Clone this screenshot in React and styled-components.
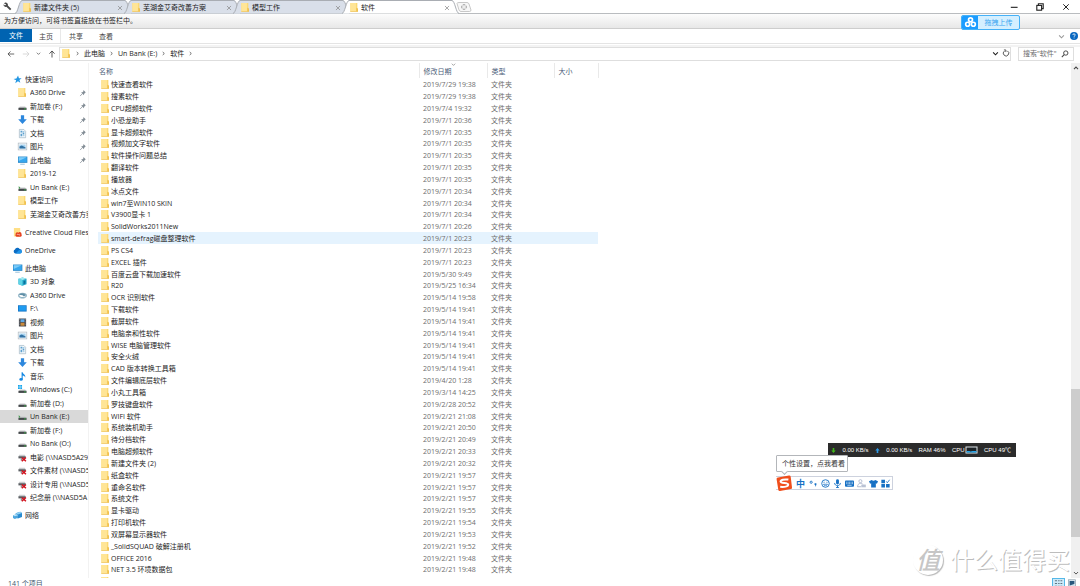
import React from "react";
import styled, { createGlobalStyle, css } from "styled-components";

const GlobalStyle = createGlobalStyle`
  * { box-sizing: border-box; }
  html, body { margin: 0; height: 100%; background: #fff; overflow: hidden; }
  #root { height: 100%; }
  body, button, input {
    font-family: "Open Sans", "Noto Sans CJK SC", sans-serif;
    font-size: 7px;
    line-height: 11px;
    color: #1c1c1c;
  }
  button { border: 0; padding: 0; background: none; }
  a { color: inherit; text-decoration: none; }
`;

/* ---------- icons ---------- */

const Svg = styled.svg`
  display: block;
  flex: none;
  overflow: visible;
`;

const drive = (
  <>
    <path d="M2 5h6l1 2H1z" fill="#c9ccce" />
    <rect x="0.5" y="6.4" width="9" height="2.4" fill="#45494c" />
    <rect x="7" y="7.2" width="1.6" height="1" fill="#3fd04e" />
  </>
);
const monitor = (
  <>
    <rect x="0" y="0.6" width="10.4" height="7" fill="#2b87c8" />
    <rect x="0.8" y="1.4" width="8.8" height="5.4" fill="#35a6ee" />
    <path d="M0.8 1.4h8.8L0.8 5.6z" fill="#7ccbf8" />
    <path d="M2.5 8.6h5v1h-5z" fill="#8fb9d6" />
  </>
);
const netDrive = (
  <>
    <path d="M1.5 2h6l1.2 2H0.5z" fill="#c9ccce" />
    <rect x="0.5" y="3.6" width="8" height="2.4" fill="#5a5e62" />
    <rect x="3" y="6" width="2" height="2.4" fill="#8d9194" />
    <path d="M4.2 5l4.6 4.2M8.8 5L4.2 9.2" stroke="#d3131f" strokeWidth="1.7" />
  </>
);

const glyphs = {
  folder: (
    <>
      <path d="M0.4 0h7.8v9.6H0.4z" fill="#fbd975" />
      <path d="M0.4 0h6.2v9.6H0.4z" fill="#ffe596" />
      <path d="M7 5.2l1.9 1v3.4H7z" fill="#f1c14e" />
      <path d="M0.4 9.2h8.2v.8H0.4z" fill="#eec667" />
    </>
  ),
  star: (
    <path d="M5.6 0.6l1 2.9 3 .2-2.4 1.9.9 3-2.6-1.6-3 2.2 1-3.3L.6 4.4l3.2-.4z" fill="#2497e3" />
  ),
  drive,
  driveGreen: (
    <>
      {drive}
      <path d="M0.6 3.6l2 1-1.4 2.6z" fill="#4f9d5a" />
    </>
  ),
  driveWin: (
    <>
      {drive}
      <path d="M0 0h2v2H0zM2.5 0h2v2h-2zM0 2.5h2v2H0zM2.5 2.5h2v2h-2z" fill="#15a5ec" />
    </>
  ),
  down: <path d="M3.2 0.4h3.6v4.4h3L5 10 .2 4.800h3z" fill="#2c87dd" />,
  doc: (
    <>
      <path d="M1.5.5h5l2 2v7.2h-7z" fill="#f4f9fc" stroke="#8aa4b5" strokeWidth=".6" />
      <path d="M2.8 2h2v2h-2zM5.2 4h1.8v2H5.2zM2.8 5.4h1.8v2.6H2.8z" fill="#5b9fce" />
      <path d="M5.2 7.4h2M5.2 2.8h2" stroke="#5b9fce" strokeWidth=".6" />
    </>
  ),
  picture: (
    <>
      <rect x="0.2" y="1.2" width="9.6" height="7.6" fill="#f6f8fa" stroke="#a9b4bd" strokeWidth=".7" />
      <rect x="1.6" y="2.8" width="6.8" height="4.4" fill="#a9d4f1" />
      <path d="M1.6 5l2.600-1.200 4.200 2.200v1.200H1.6z" fill="#3373a5" />
    </>
  ),
  monitor,
  creative: (
    <>
      <path d="M1 0h7v9.4H1z" fill="#ffdf86" />
      <path d="M3 7a1.8 1.8 0 013-1.8A2 2 0 019.4 7 1.6 1.6 0 018 9.6H4.6A1.6 1.6 0 013 7z" fill="#e5401f" />
      <path d="M4.4 7.8a1 1 0 011.6-.6l1 .9a.8.8 0 000-1.4" fill="none" stroke="#fff" strokeWidth=".6" />
    </>
  ),
  cloud: (
    <>
      <path d="M2.4 8.2a2.2 2.2 0 01-.2-4.2A3 3 0 017.4 3.2a2.5 2.5 0 010 5z" fill="#0a6cc4" />
      <path d="M3 8.2l3.4-3.4A2.4 2.4 0 019.8 6a2 2 0 01-1.4 2.2z" fill="#2196ea" />
    </>
  ),
  cube: (
    <>
      <path d="M0.5 2L5 .5 9.5 2v6L5 9.6.5 8z" fill="#25a7c9" />
      <path d="M0.5 2L5 3.4v6.2L.5 8z" fill="#5fd4e6" />
      <path d="M0.5 2L5 .5 9.5 2 5 3.4z" fill="#a4ebf2" />
      <path d="M6.2 4.4l2-.6v3.4l-2 .8z" fill="#0b6f99" />
    </>
  ),
  a360: (
    <>
      <ellipse cx="5" cy="5" rx="4.2" ry="2.4" fill="none" stroke="#8fb3c5" strokeWidth="1.4" />
      <path d="M1 4.2C3 2 7 2.2 9 4.4L6.6 6 5 4.6z" fill="#5f8ea6" />
      <path d="M2 7.4c2 1.4 4.4 1 5.6.2" stroke="#b6ccd6" strokeWidth=".9" fill="none" />
    </>
  ),
  screen: (
    <>
      <rect x="0" y="1.4" width="9.6" height="7" fill="#1273c4" />
      <rect x="0.8" y="2.2" width="8" height="5.2" fill="#1f9bf0" />
    </>
  ),
  video: (
    <>
      <rect x="1" y="0.6" width="8" height="8.8" fill="#3b3e45" />
      <path d="M2.8 1.4h4.4v3.2H2.8z" fill="#5fa9e6" />
      <path d="M2.8 5.2h4.4v3.4H2.8z" fill="#c98a3c" />
      <path d="M1.9 1v8M8.1 1v8" stroke="#cfd2d6" strokeWidth=".6" strokeDasharray="1 1" />
    </>
  ),
  music: (
    <>
      <path d="M4 .2h1.200c.2 2.200 3.600 2.600 2.800 6-.4-1.600-1.600-2.200-2.800-2.400V8H4z" fill="#1388e3" />
      <ellipse cx="3.400" cy="8.200" rx="1.900" ry="1.500" fill="#1388e3" />
    </>
  ),
  netDrive,
  network: (
    <>
      <path d="M3 2.4L8 .8l2 1.4v4.4L5.4 8.4 3 7z" fill="#2a8bd0" />
      <path d="M3 2.4L8 .8l2 1.4-4.6 1.6z" fill="#8fd0f3" />
      <path d="M0 4.6l4-1 1.6 1v3L2 9 0 7.8z" fill="#4ca5dd" />
      <path d="M0 4.6l4-1 1.6 1L2 5.8z" fill="#b8e3f8" />
    </>
  ),
  pin: (
    <>
      <path d="M5.6 1.4l3 3-1 .4-1.2 1.4-.2 1.6L2.6 4.4l1.6-.2L5.4 3z" fill="#828c95" />
      <path d="M4 6L1.4 8.8" stroke="#828c95" strokeWidth=".9" />
    </>
  ),
  wrench: (
    <path
      d="M1 1.8L2.4.6a2.6 2.6 0 013 3.2l3.9 4-1.5 1.5-4-3.9A2.6 2.6 0 01.6 2.4L2.2 4 3.6 2.6z"
      fill="#484848"
    />
  ),
  back: <path d="M9 5H1.4M4.4 1.8L1.2 5l3.2 3.2" fill="none" stroke="#444" strokeWidth="1" />,
  forward: <path d="M1 5h7.6M5.6 1.8L8.8 5 5.6 8.2" fill="none" stroke="#cfcfcf" strokeWidth="1" />,
  up: <path d="M5 9.4V1.4M1.8 4.6L5 1.2l3.2 3.4" fill="none" stroke="#444" strokeWidth="1.1" />,
  chevDown: <path d="M1.6 3.4L5 6.8l3.4-3.4" fill="none" stroke="currentColor" strokeWidth="1.5" />,
  chevUp: <path d="M1.6 6.8L5 3.4l3.4 3.4" fill="none" stroke="currentColor" strokeWidth="1.7" />,
  chevRight: <path d="M3.4 2L6.6 5 3.4 8" fill="none" stroke="#444" strokeWidth="1.5" />,
  close: <path d="M1.6 1.6l6.8 6.8M8.4 1.6L1.6 8.4" fill="none" stroke="currentColor" strokeWidth="1.2" />,
  minimize: <path d="M1 5.4h8.4" stroke="#222" strokeWidth="1.4" />,
  restore: (
    <>
      <rect x="1" y="3" width="6" height="6" fill="none" stroke="#222" strokeWidth="1.4" />
      <path d="M3 3V1h6v6H7" fill="none" stroke="#222" strokeWidth="1.4" />
    </>
  ),
  refresh: <path d="M3 2.6A3.4 3.4 0 106.8 2.4M2.4 1.2h2.4v2.6" fill="none" stroke="#555" strokeWidth="1.2" />,
  search: (
    <>
      <circle cx="6" cy="3.8" r="2.7" fill="none" stroke="#444" strokeWidth="1.2" />
      <path d="M4 5.8L1 9" stroke="#444" strokeWidth="1.3" />
    </>
  ),
  help: (
    <>
      <circle cx="5" cy="5" r="5" fill="#0a68c0" />
      <path d="M3.5 3.8a1.5 1.5 0 113 0c0 1-1.4 1-1.4 2.2M5.1 7v1" fill="none" stroke="#fff" strokeWidth="1" />
    </>
  ),
  disk: (
    <g fill="none" stroke="#fff" strokeWidth="1.5">
      <circle cx="5" cy="2.6" r="1.8" />
      <circle cx="2.4" cy="6.6" r="1.8" />
      <circle cx="7.6" cy="6.6" r="1.8" />
    </g>
  ),
  punct: (
    <>
      <circle cx="2.4" cy="3.6" r="1.2" fill="none" stroke="#1670c4" strokeWidth="1" />
      <path d="M6.2 4.8h2v2L6.6 8.8l.4-2h-.8z" fill="#1670c4" />
    </>
  ),
  smile: (
    <>
      <circle cx="5" cy="5" r="4.2" fill="none" stroke="#1670c4" strokeWidth="1" />
      <path d="M3.4 3v1.4M6.6 3v1.4M2.8 5.8a2.3 2.3 0 004.4 0z" fill="none" stroke="#1670c4" strokeWidth=".8" />
    </>
  ),
  mic: (
    <>
      <rect x="3.4" y="0.4" width="3.2" height="5.6" rx="1.6" fill="#1670c4" />
      <path d="M1.8 4.4c0 4 6.4 4 6.4 0M5 7.4v2.2M3.4 9.4h3.2" fill="none" stroke="#1670c4" strokeWidth="1" />
    </>
  ),
  keyboard: (
    <>
      <rect x="0" y="1.6" width="10" height="7" rx="1" fill="#1670c4" />
      <path d="M1.4 3.6h7.400M1.4 5.2h7.400" stroke="#fff" strokeWidth=".8" strokeDasharray="1 .6" />
      <path d="M2.6 7h4.8" stroke="#fff" strokeWidth=".7" />
    </>
  ),
  person: (
    <>
      <circle cx="3.8" cy="2.4" r="1.7" fill="none" stroke="#a9b4cb" strokeWidth=".9" />
      <path d="M.6 8.6C.6 4 6 4 6.4 6M.6 8.6h4" fill="none" stroke="#a9b4cb" strokeWidth="1" />
      <rect x="4.8" y="6.2" width="5" height="3" fill="#b9c2d4" />
    </>
  ),
  shirt: <path d="M3 1c1 1.2 3 1.2 4 0l3 1.6-1.2 2.6-1.2-.6V9.4H2.4V4.6l-1.2.6L0 2.6z" fill="#1670c4" />,
  grid: (
    <>
      <path d="M.4.8h4v3.8h-4zM.4 5.6h4v3.8h-4zM5.6 5.6h4v3.8h-4z" fill="#1670c4" />
      <path d="M5.8 2.6l1.2 1.6L9.6.8" fill="none" stroke="#1670c4" strokeWidth=".9" />
    </>
  ),
  arrowDown: <path d="M3.4 0h3.200v5H9.400L5 10 .6 5h2.800z" fill="#3fb618" />,
  arrowUp: <path d="M3.4 10h3.200V5H9.400L5 0 .6 5h2.800z" fill="#2f9be8" />,
  details: (
    <path d="M1 2h2.4M1 5h2.4M1 8h2.4M4.6 2h1.6M4.6 5h1.6M4.6 8h1.6M7.2 2h2M7.2 5h2M7.2 8h2" stroke="#5f7483" strokeWidth="1.2" />
  ),
  thumbs: (
    <>
      <rect x="0.5" y="1" width="9" height="8" fill="#dbe9f3" stroke="#8296a3" strokeWidth=".8" />
      <path d="M2 2.4h6v4L2 8z" fill="#27567c" />
    </>
  ),
};

const Icon = ({ name, size = 9 }) => (
  <Svg width={size} height={size} viewBox="0 0 10 10" aria-hidden="true">
    {glyphs[name]}
  </Svg>
);

/* ---------- window frame ---------- */

const Window = styled.div`
  position: relative;
  display: flex;
  flex-direction: column;
  height: 100%;
  overflow: hidden;
  background: #fff;
`;

const TabStrip = styled.header`
  display: flex;
  height: 14px;
  flex: none;
  border-bottom: 1px solid #b9bcbf;
`;

const WrenchButton = styled.button`
  width: 15px;
  padding: 2px 0 0 3px;
  display: flex;
`;

const TabItem = styled.div`
  position: relative;
  display: flex;
  align-items: center;
  gap: 2px;
  width: 109px;
  height: 14px;
  padding: 1px 0 0 8px;
  z-index: ${(p) => (p.$active ? 2 : 0)};
`;

const TabShape = styled.svg`
  position: absolute;
  left: 0;
  top: 0;
  width: 120px;
  height: 14px;
  z-index: -1;
`;

const TabLabel = styled.button`
  flex: 1;
  text-align: left;
  white-space: nowrap;
`;

const TabClose = styled.button`
  color: #888;
  padding-right: 1px;
`;

const NewTab = styled.button`
  margin-left: 5px;
`;

const WindowButtons = styled.div`
  display: flex;
  align-items: center;
  gap: 18px;
  margin-left: auto;
  padding-right: 10px;
  color: #222;
`;

const BookmarkBar = styled.div`
  flex: none;
  height: 15px;
  padding: 1px 4px;
  background: linear-gradient(#fcfcfc, #e7e7e7);
  border-bottom: 1px solid #cdcdcd;
`;

const Ribbon = styled.nav`
  display: flex;
  align-items: stretch;
  flex: none;
  height: 15px;
  border-bottom: 1px solid #e4e4e4;
`;

const RibbonTab = styled.button`
  width: 30px;
  color: #444;
  ${(p) =>
    p.$file &&
    css`
      width: 32px;
      margin-bottom: 1px;
      background: #0063b1;
      color: #fff;
    `}
  ${(p) =>
    p.$current &&
    css`
      width: 29px;
      border-right: 1px solid #e8e8e8;
    `}
`;

const RibbonTools = styled.div`
  display: flex;
  align-items: center;
  gap: 5px;
  margin-left: auto;
  padding-right: 2px;
  color: #999;
`;

const AddressRow = styled.div`
  display: flex;
  flex: none;
  height: 18px;
  padding-right: 6px;
  border-top: 2px solid #f3f3f3;
  margin-top: 1px;
`;

const NavButtons = styled.div`
  display: flex;
  align-items: center;
  justify-content: space-between;
  width: 59px;
  padding: 0 3px 3px 7px;
  color: #555;
`;

const fieldBox = css`
  display: flex;
  align-items: center;
  height: 14px;
  border: 1px solid #dedede;
`;

const AddressBox = styled.div`
  ${fieldBox}
  flex: 1;
  gap: 4px;
  padding: 0 0 2px 2px;
`;

const AddressTools = styled.div`
  display: flex;
  align-items: center;
  gap: 3px;
  margin-left: auto;
`;

const SearchBox = styled.label`
  ${fieldBox}
  width: 56px;
  margin-left: 7px;
  padding: 0 4px 1px 4px;
`;

const SearchInput = styled.input`
  flex: 1;
  min-width: 0;
  padding: 0;
  border: 0;
  outline: 0;
  background: none;
  &::placeholder { color: #6d6d6d; opacity: 1; }
`;

/* ---------- body ---------- */

const Body = styled.div`
  display: flex;
  flex: 1;
  min-height: 0;
`;

const Sidebar = styled.nav`
  flex: none;
  width: 89px;
  padding-top: 9px;
  border-right: 1px solid #f2f2f2;
  overflow: hidden;
`;

const TreeGroup = styled.ul`
  list-style: none;
  margin: 0 0 4px;
  padding: 0;
`;

const TreeItem = styled.li`
  height: 14px;
  &:nth-child(even) { height: 13px; }
`;

const TreeLink = styled.a`
  display: flex;
  align-items: center;
  gap: 3px;
  width: 88px;
  height: 100%;
  padding-left: ${(p) => (p.$root ? 13 : 18)}px;
  background: ${(p) => (p.$selected ? "#d9d9d9" : "transparent")};
  white-space: nowrap;
  overflow: hidden;
`;

const TreeText = styled.span`
  flex: 1;
  min-width: 0;
  overflow: hidden;
`;

const PinSlot = styled.span`
  padding-right: 1px;
`;

const Listing = styled.main`
  flex: 1;
  min-width: 0;
  padding-left: 9px;
  overflow: hidden;
`;

const FileTable = styled.table`
  width: 500px;
  table-layout: fixed;
  border-collapse: collapse;
`;

const HeadCell = styled.th`
  position: relative;
  width: ${(p) => p.$width}px;
  height: 15px;
  padding: 1px 0 0 ${(p) => (p.$first ? 1 : 4)}px;
  border-right: 1px solid #e9e9e9;
  text-align: left;
  font-weight: 400;
  color: #4c607a;
`;

const SortMark = styled.span`
  position: absolute;
  left: 31px;
  top: -1px;
  color: #888;
`;

const Row = styled.tr`
  height: 12px;
  background: ${(p) => (p.$hover ? "#e5f3fe" : "transparent")};
  &:nth-child(6n) { height: 11px; }
`;

const Cell = styled.td`
  padding: 0 0 0 4px;
  color: #6d6d6d;
  white-space: nowrap;
`;

const NameCell = styled(Cell)`
  padding-left: 3px;
  color: #1c1c1c;
`;

const NameWrap = styled.span`
  display: flex;
  align-items: center;
  gap: 1px;
`;

const ScrollTrack = styled.div`
  display: flex;
  flex-direction: column;
  align-items: center;
  flex: none;
  width: 9px;
  padding: 2px 0;
  background: #f0f0f0;
  color: #444;
`;

const ScrollThumb = styled.div`
  width: 100%;
  height: 148px;
  margin: auto 0 33px;
  background: #cdcdcd;
`;

const StatusBar = styled.footer`
  display: flex;
  justify-content: space-between;
  flex: none;
  height: 8px;
  padding: 0 2px 0 8px;
  color: #40566e;
`;

const StatusText = styled.span`
  height: 11px;
`;

const ViewButtons = styled.div`
  display: flex;
`;

const ViewButton = styled.button`
  display: flex;
  justify-content: center;
  width: 13px;
  height: 12px;
  border: 1px solid ${(p) => (p.$on ? "#55b8e8" : "transparent")};
  background: ${(p) => (p.$on ? "#cdeaf9" : "transparent")};
`;

/* ---------- floating widgets ---------- */

const UploadButton = styled.button`
  position: absolute;
  top: 15px;
  right: 60px;
  display: flex;
  width: 59px;
  height: 15px;
  border: 1px solid #45b1f7;
  border-radius: 2px;
  background: #d4efff;
  overflow: hidden;
  color: #3aa4f0;
`;

const UploadIcon = styled.span`
  display: flex;
  align-items: center;
  justify-content: center;
  width: 16px;
  height: 13px;
  background: #1c9cff;
`;

const UploadText = styled.span`
  flex: 1;
  line-height: 13px;
`;

const Monitor = styled.aside`
  position: absolute;
  right: 64px;
  bottom: 129px;
  display: flex;
  align-items: center;
  justify-content: space-between;
  width: 188px;
  height: 14px;
  padding: 0 5px 0 3px;
  background: #2b2b2b;
  color: #fff;
  font-family: "Liberation Sans", "Noto Sans CJK SC", sans-serif;
  font-size: 6px;
  white-space: nowrap;
`;

const CpuGauge = styled.span`
  display: flex;
  align-items: center;
`;

const Tooltip = styled.div`
  position: absolute;
  right: 232px;
  bottom: 114px;
  width: 72px;
  height: 17px;
  padding-left: 5px;
  border: 1px solid #b3b6ba;
  border-radius: 1px;
  background: #fff;
  line-height: 15px;
  color: #333;
  white-space: nowrap;
  &::after {
    content: "";
    position: absolute;
    left: 5px;
    bottom: -3px;
    width: 4px;
    height: 4px;
    border: solid #b3b6ba;
    border-width: 0 1px 1px 0;
    background: #fff;
    transform: rotate(45deg);
  }
`;

const InputBar = styled.div`
  position: absolute;
  right: 187px;
  bottom: 96px;
  display: flex;
  align-items: center;
  gap: 3px;
  height: 14px;
  padding-right: 2px;
  border: 1px solid #cdd2de;
  border-left: 0;
  background: #fff;
`;

const Mode = styled.button`
  width: 11px;
  color: #1670c4;
  font-weight: 700;
  font-size: 9px;
`;

const Watermark = styled.div`
  position: absolute;
  right: 10px;
  bottom: 10px;
  display: flex;
  align-items: center;
  gap: 7px;
  color: #fff;
  font-size: 24px;
  line-height: 32px;
  text-shadow: 1px 1px 0 #bdbdbd;
`;

const WatermarkSeal = styled.span`
  display: flex;
  align-items: center;
  justify-content: center;
  width: 30px;
  height: 30px;
  border-radius: 50%;
  box-shadow: 1px 1px 1px #b8b8b8;
  color: #c6c6c6;
  font-weight: 500;
  font-style: italic;
  text-shadow: none;
`;

/* ---------- data ---------- */

const tabs = ["新建文件夹 (5)", "芜湖金艾奇改善方案", "模型工作", "软件"];

const tree = [
  [
    ["star", "快速访问", "root"],
    ["folder", "A360 Drive", "pin"],
    ["drive", "新加卷 (F:)", "pin"],
    ["down", "下载", "pin"],
    ["doc", "文档", "pin"],
    ["picture", "图片", "pin"],
    ["monitor", "此电脑", "pin"],
    ["folder", "2019-12"],
    ["driveGreen", "Un Bank (E:)"],
    ["folder", "模型工作"],
    ["folder", "芜湖金艾奇改善方案"],
  ],
  [["creative", "Creative Cloud Files", "root"]],
  [["cloud", "OneDrive", "root"]],
  [
    ["monitor", "此电脑", "root"],
    ["cube", "3D 对象"],
    ["a360", "A360 Drive"],
    ["screen", "F:\\"],
    ["video", "视频"],
    ["picture", "图片"],
    ["doc", "文档"],
    ["down", "下载"],
    ["music", "音乐"],
    ["driveWin", "Windows (C:)"],
    ["drive", "新加卷 (D:)"],
    ["driveGreen", "Un Bank (E:)", "selected"],
    ["drive", "新加卷 (F:)"],
    ["drive", "No Bank (O:)"],
    ["netDrive", "电影 (\\\\NASD5A29"],
    ["netDrive", "文件素材 (\\\\NASD5"],
    ["netDrive", "设计专用 (\\\\NASD5"],
    ["netDrive", "纪念册 (\\\\NASD5A"],
  ],
  [["network", "网络", "root"]],
];

const files = [
  ["快速查看软件", "2019/7/29 19:38"],
  ["搜素软件", "2019/7/29 19:38"],
  ["CPU超频软件", "2019/7/4 19:32"],
  ["小恐龙助手", "2019/7/1 20:36"],
  ["显卡超频软件", "2019/7/1 20:35"],
  ["视频加文字软件", "2019/7/1 20:35"],
  ["软件操作问题总结", "2019/7/1 20:35"],
  ["翻译软件", "2019/7/1 20:35"],
  ["播放器", "2019/7/1 20:35"],
  ["冰点文件", "2019/7/1 20:34"],
  ["win7至WIN10 SKIN", "2019/7/1 20:34"],
  ["V3900显卡 1", "2019/7/1 20:34"],
  ["SolidWorks2011New", "2019/7/1 20:26"],
  ["smart-defrag磁盘整理软件", "2019/7/1 20:23"],
  ["PS CS4", "2019/7/1 20:23"],
  ["EXCEL 插件", "2019/7/1 20:23"],
  ["百度云盘下载加速软件", "2019/5/30 9:49"],
  ["R20", "2019/5/25 16:34"],
  ["OCR 识别软件", "2019/5/14 19:58"],
  ["下载软件", "2019/5/14 19:41"],
  ["截屏软件", "2019/5/14 19:41"],
  ["电脑亲和性软件", "2019/5/14 19:41"],
  ["WISE 电脑管理软件", "2019/5/14 19:41"],
  ["安全火绒", "2019/5/14 19:41"],
  ["CAD 版本转换工具箱", "2019/5/14 19:41"],
  ["文件编辑底层软件", "2019/4/20 1:28"],
  ["小丸工具箱", "2019/3/14 14:25"],
  ["罗技键盘软件", "2019/2/28 20:52"],
  ["WIFI 软件", "2019/2/21 21:08"],
  ["系统装机助手", "2019/2/21 20:50"],
  ["待分档软件", "2019/2/21 20:49"],
  ["电脑超频软件", "2019/2/21 20:33"],
  ["新建文件夹 (2)", "2019/2/21 20:32"],
  ["纸盒软件", "2019/2/21 19:57"],
  ["重命名软件", "2019/2/21 19:57"],
  ["系统文件", "2019/2/21 19:57"],
  ["显卡驱动", "2019/2/21 19:55"],
  ["打印机软件", "2019/2/21 19:54"],
  ["双屏幕显示器软件", "2019/2/21 19:53"],
  ["_SolidSQUAD 破解注册机", "2019/2/21 19:52"],
  ["OFFICE 2016", "2019/2/21 19:48"],
  ["NET 3.5 环境数据包", "2019/2/21 19:48"],
];

const columns = [
  ["名称", 321],
  ["修改日期", 68],
  ["类型", 67],
  ["大小", 44],
];

/* ---------- parts ---------- */

const Tab = ({ label, active }) => (
  <TabItem $active={active}>
    <TabShape viewBox="0 0 120 14" aria-hidden="true">
      <path
        d="M0 13.5C3 13 4 1 7 .5H110c3 .5 4 12.5 7 13"
        fill={active ? "#fff" : "#d9dfe9"}
        stroke="#a9adb3"
        strokeWidth="1"
      />
    </TabShape>
    <Icon name="folder" size={9} />
    <TabLabel>{label}</TabLabel>
    <TabClose aria-label="关闭标签">
      <Icon name="close" size={6} />
    </TabClose>
  </TabItem>
);

const TreeRow = ({ icon, label, kind }) => (
  <TreeItem>
    <TreeLink href="#" $root={kind === "root"} $selected={kind === "selected"}>
      <Icon name={icon} size={9} />
      <TreeText>{label}</TreeText>
      {kind === "pin" && (
        <PinSlot>
          <Icon name="pin" size={8} />
        </PinSlot>
      )}
    </TreeLink>
  </TreeItem>
);

const SogouLogo = () => (
  <Svg width="16" height="16" viewBox="0 0 16 16" aria-hidden="true">
    <path d="M2 2.4L13 .6a1.500 1.500 0 011.700 1.200L16 12.400a1.500 1.500 0 01-1.200 1.700L4 16a1.500 1.500 0 01-1.700-1.200L.6 4.200A1.500 1.500 0 012 2.400z" fill="#f04e1c" />
    <path d="M12.400 4.600C8 4 4.400 4.800 4.600 6.600c.2 2 7.400.8 7.600 3 .1 2-4 2.600-8 2.200" fill="none" stroke="#fff" strokeWidth="2" />
  </Svg>
);

export default function App() {
  return (
    <Window>
      <GlobalStyle />
      <TabStrip>
        <WrenchButton aria-label="设置">
          <Icon name="wrench" size={9} />
        </WrenchButton>
        {tabs.map((t, i) => (
          <Tab key={t} label={t} active={i === 3} />
        ))}
        <NewTab aria-label="新建标签">
          <Svg width="16" height="12" viewBox="0 0 16 12">
            <path d="M1 2.5Q1 1.500 3 1.500h8q1.500 0 2 1.500l2 6q0 1.500-1.500 1.500H5Q3.500 10.500 3 9z" fill="#f7f7f7" stroke="#bbb" strokeWidth=".8" />
            <path d="M8 3v6M5 6h6" stroke="#b5b5b5" strokeWidth="2.4" />
            <path d="M8 4v4M6 6h4" stroke="#fff" strokeWidth="1" />
          </Svg>
        </NewTab>
        <WindowButtons>
          <button aria-label="最小化"><Icon name="minimize" size={8} /></button>
          <button aria-label="还原"><Icon name="restore" size={8} /></button>
          <button aria-label="关闭"><Icon name="close" size={8} /></button>
        </WindowButtons>
      </TabStrip>

      <BookmarkBar>为方便访问，可将书签直接放在书签栏中。</BookmarkBar>

      <Ribbon>
        <RibbonTab $file>文件</RibbonTab>
        <RibbonTab $current>主页</RibbonTab>
        <RibbonTab>共享</RibbonTab>
        <RibbonTab>查看</RibbonTab>
        <RibbonTools>
          <Icon name="chevDown" size={7} />
          <Icon name="help" size={8} />
        </RibbonTools>
      </Ribbon>

      <AddressRow>
        <NavButtons>
          <Icon name="back" size={8} />
          <Icon name="forward" size={8} />
          <Icon name="chevDown" size={5} />
          <Icon name="up" size={8} />
        </NavButtons>
        <AddressBox>
          <Icon name="folder" size={9} />
          <Icon name="chevRight" size={5} />
          <a href="#">此电脑</a>
          <Icon name="chevRight" size={5} />
          <a href="#">Un Bank (E:)</a>
          <Icon name="chevRight" size={5} />
          <a href="#">软件</a>
          <Icon name="chevRight" size={5} />
          <AddressTools>
            <Icon name="chevDown" size={7} />
            <Icon name="refresh" size={8} />
          </AddressTools>
        </AddressBox>
        <SearchBox>
          <SearchInput type="text" aria-label="搜索" placeholder={'搜索"软件"'} />
          <Icon name="search" size={8} />
        </SearchBox>
      </AddressRow>

      <Body>
        <Sidebar>
          {tree.map((group, g) => (
            <TreeGroup key={g}>
              {group.map(([icon, label, kind]) => (
                <TreeRow key={label} icon={icon} label={label} kind={kind} />
              ))}
            </TreeGroup>
          ))}
        </Sidebar>

        <Listing>
          <FileTable>
            <thead>
              <tr>
                {columns.map(([label, width], i) => (
                  <HeadCell key={label} $width={width} $first={i === 0}>
                    {label}
                    {i === 1 && (
                      <SortMark>
                        <Icon name="chevDown" size={5} />
                      </SortMark>
                    )}
                  </HeadCell>
                ))}
              </tr>
            </thead>
            <tbody>
              {files.map(([name, date], i) => (
                <Row key={name} $hover={i === 13}>
                  <NameCell>
                    <NameWrap>
                      <Icon name="folder" size={9} />
                      {name}
                    </NameWrap>
                  </NameCell>
                  <Cell>{date}</Cell>
                  <Cell>文件夹</Cell>
                  <Cell />
                </Row>
              ))}
              <Row>
                <NameCell>
                  <NameWrap>
                    <Icon name="folder" size={9} />
                  </NameWrap>
                </NameCell>
              </Row>
            </tbody>
          </FileTable>
        </Listing>

        <ScrollTrack>
          <Icon name="chevUp" size={6} />
          <ScrollThumb />
          <Icon name="chevDown" size={6} />
        </ScrollTrack>
      </Body>

      <StatusBar>
        <StatusText>141 个项目</StatusText>
        <ViewButtons>
          <ViewButton $on aria-label="详细信息"><Icon name="details" size={9} /></ViewButton>
          <ViewButton aria-label="大缩略图"><Icon name="thumbs" size={8} /></ViewButton>
        </ViewButtons>
      </StatusBar>

      <UploadButton>
        <UploadIcon><Icon name="disk" size={11} /></UploadIcon>
        <UploadText>拖拽上传</UploadText>
      </UploadButton>

      <Monitor>
        <Icon name="arrowDown" size={5} />
        <span>0.00 KB/s</span>
        <Icon name="arrowUp" size={5} />
        <span>0.00 KB/s</span>
        <span>RAM 46%</span>
        <CpuGauge>
          CPU
          <Svg width="13" height="8" viewBox="0 0 13 8">
            <rect x="1" y="1" width="11" height="6" fill="#1d2327" stroke="#dfe6ea" strokeWidth="1" />
            <path d="M1.5 5h3l1 .6 2-.6h4v1.500h-10z" fill="#24a4e8" />
          </Svg>
        </CpuGauge>
        <span>CPU 49℃</span>
      </Monitor>

      <InputBar>
        <SogouLogo />
        <Mode>中</Mode>
        <Icon name="punct" size={9} />
        <Icon name="smile" size={9} />
        <Icon name="mic" size={9} />
        <Icon name="keyboard" size={9} />
        <Icon name="person" size={9} />
        <Icon name="shirt" size={9} />
        <Icon name="grid" size={9} />
      </InputBar>
      <Tooltip>个性设置，点我看看</Tooltip>

      <Watermark>
        <WatermarkSeal>值</WatermarkSeal>
        什么值得买
      </Watermark>
    </Window>
  );
}
